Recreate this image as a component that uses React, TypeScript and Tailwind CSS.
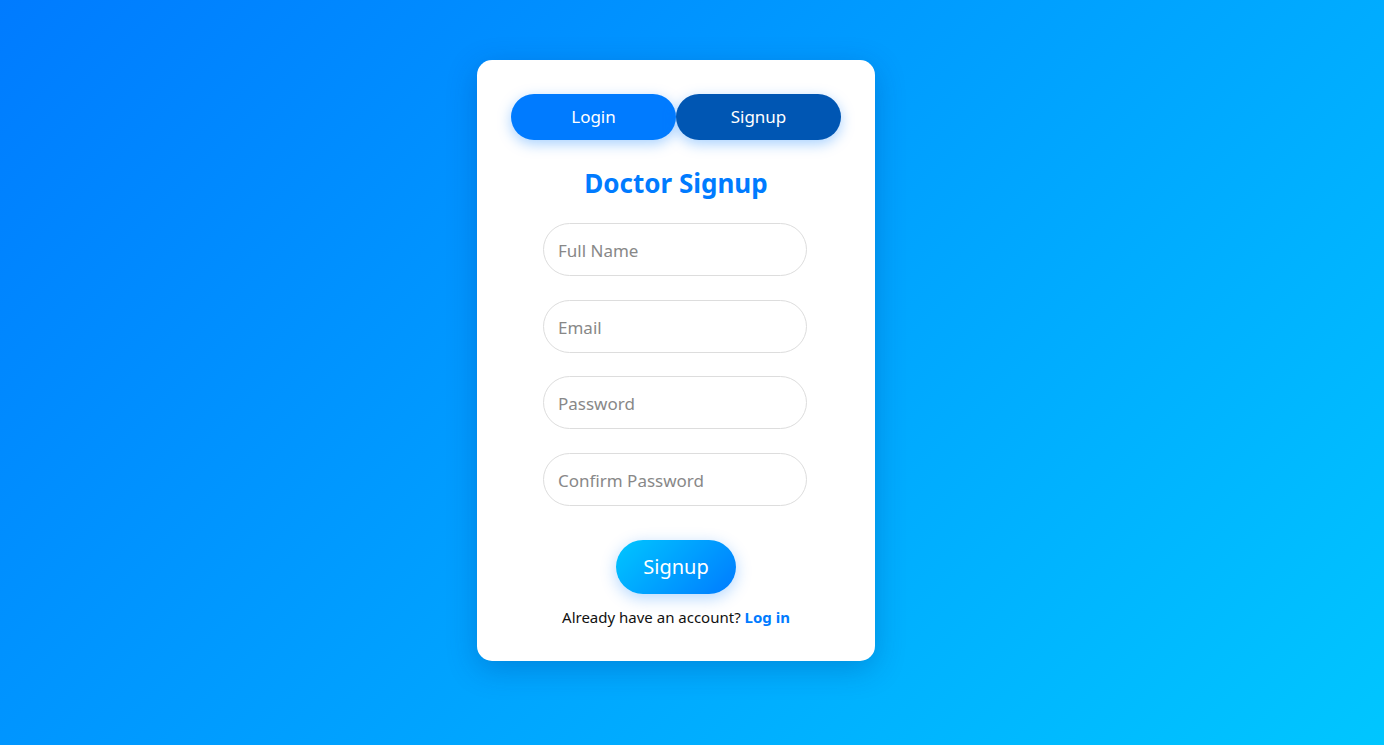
import React from "react";

export default function App() {
  return (
    <div
      className="flex min-h-screen w-full justify-center bg-[linear-gradient(135deg,#007bff,#00c6ff)] pt-[60px] pr-[32px]"
      style={{ fontFamily: '"Noto Sans", "Open Sans", sans-serif' }}
    >
      <div className="flex h-[601px] w-[398px] flex-col items-center rounded-[15px] bg-white px-[34px] pt-[34px] shadow-[0_8px_30px_rgba(0,40,120,0.25)]">
        <div className="flex w-[330px]">
          <button className="h-[46px] w-[165px] rounded-full bg-[#007bff] text-[17px] text-white shadow-[0_4px_14px_rgba(0,123,255,0.35)]">
            Login
          </button>
          <button className="h-[46px] w-[165px] rounded-full bg-[#0056b3] text-[17px] text-white shadow-[0_4px_14px_rgba(0,123,255,0.35)]">
            Signup
          </button>
        </div>
        <h2 className="mt-[24px] text-[26px] font-bold leading-[38px] text-[#007bff]">
          Doctor Signup
        </h2>
        <div className="mt-[21px] flex flex-col gap-[23.5px] pr-[2px]">
          {["Full Name", "Email", "Password", "Confirm Password"].map((p) => (
            <input
              key={p}
              type={p.includes("Password") ? "password" : "text"}
              placeholder={p}
              className="h-[53px] w-[264px] rounded-full border border-[#dddddd] bg-white px-[14px] pt-[2px] text-[17px] text-[#333] outline-none placeholder:text-[#888]"
            />
          ))}
        </div>
        <button className="mt-[34px] h-[54px] w-[120px] rounded-full bg-[linear-gradient(135deg,#00c6ff,#007bff)] text-[20px] text-white shadow-[0_4px_16px_rgba(0,123,255,0.3)]">
          Signup
        </button>
        <p className="mt-[11px] text-[15px] leading-[24px] text-[#111]">
          Already have an account?{" "}
          <a className="font-bold text-[#007bff]">Log in</a>
        </p>
      </div>
    </div>
  );
}
